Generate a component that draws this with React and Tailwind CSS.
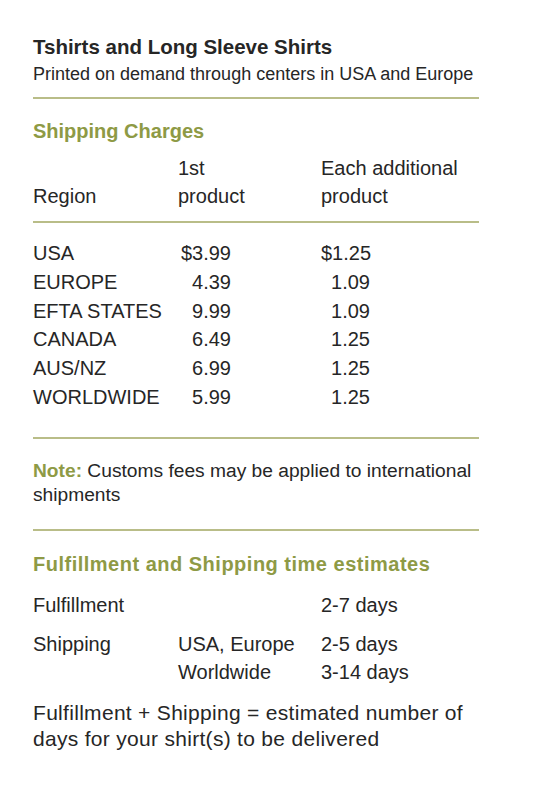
const rows = [
  ['USA', '$3.99', '$1.25'],
  ['EUROPE', '4.39', '1.09'],
  ['EFTA STATES', '9.99', '1.09'],
  ['CANADA', '6.49', '1.25'],
  ['AUS/NZ', '6.99', '1.25'],
  ['WORLDWIDE', '5.99', '1.25'],
]

function Rule({ className = '' }) {
  return <div className={`h-[2px] w-[446px] bg-[#b9bd88] ${className}`} />
}

export default function App() {
  return (
    <div className="min-h-[797px] bg-white pl-[33px] pt-[34px] text-[#262626]" style={{ fontFamily: '"Liberation Sans", Arial, sans-serif' }}>
      <h1 className="text-[20.5px] font-bold leading-[26px]">Tshirts and Long Sleeve Shirts</h1>
      <p className="mt-[2px] text-[18px] leading-[24px]">Printed on demand through centers in USA and Europe</p>
      <Rule className="mt-[11px]" />

      <h2 className="mt-[19px] text-[20px] font-bold leading-[26px] text-[#8e9a45]">Shipping Charges</h2>
      <div className="mt-[10px] grid grid-cols-[145px_143px_1fr] text-[20px] leading-[28px]">
        <div className="self-end">Region</div>
        <div>1st<br />product</div>
        <div>Each additional<br />product</div>
      </div>
      <Rule className="mt-[11px]" />

      <div className="mt-[16px] text-[20px] leading-[28.8px]">
        {rows.map(([region, first, extra]) => (
          <div key={region} className="grid grid-cols-[145px_143px_1fr]">
            <div>{region}</div>
            <div><span className="inline-block w-[53px] text-right">{first}</span></div>
            <div><span className="inline-block w-[49px] text-right">{extra}</span></div>
          </div>
        ))}
      </div>
      <Rule className="mt-[25px]" />

      <p className="mt-[20px] w-[446px] text-[19.2px] leading-[24px]">
        <span className="font-bold text-[#8e9a45]">Note:</span> Customs fees may be applied to international shipments
      </p>
      <Rule className="mt-[22px]" />

      <h2 className="mt-[20px] text-[20px] font-bold leading-[26px] tracking-[0.5px] text-[#8e9a45]">Fulfillment and Shipping time estimates</h2>
      <div className="mt-[14px] grid grid-cols-[145px_143px_1fr] text-[20px] leading-[28px]">
        <div>Fulfillment</div>
        <div />
        <div>2-7 days</div>
      </div>
      <div className="mt-[11px] grid grid-cols-[145px_143px_1fr] text-[20px] leading-[28px]">
        <div>Shipping</div>
        <div>USA, Europe<br />Worldwide</div>
        <div>2-5 days<br />3-14 days</div>
      </div>
      <p className="mt-[14px] w-[446px] text-[21px] leading-[26px] tracking-[0.3px]">
        Fulfillment + Shipping = estimated number of days for your shirt(s) to be delivered
      </p>
    </div>
  )
}
